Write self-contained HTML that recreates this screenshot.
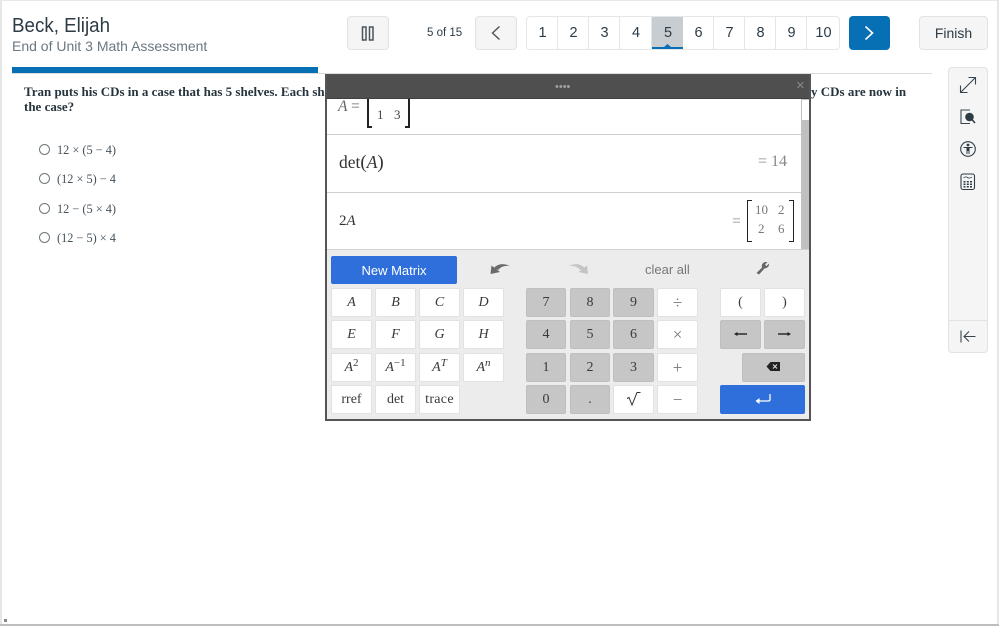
<!DOCTYPE html>
<html lang="en"><head><meta charset="utf-8"><title>Assessment</title>
<style>
html,body{margin:0;padding:0;width:999px;height:626px;overflow:hidden;background:#fff}
body{position:relative;font-family:"Liberation Sans",sans-serif;color:#2d3b45}
.a{position:absolute;box-sizing:border-box}
.btn{background:#f5f5f5;border:1px solid #dfe3e5;border-radius:4px}
.n{position:absolute;top:0;height:32px;line-height:33px;text-align:center;font-size:14.5px;color:#2d3b45;border-right:1px solid #e4e7e9;box-sizing:border-box;padding-left:1px}
.serif{font-family:"Liberation Serif",serif}
.k{position:absolute;box-sizing:border-box;height:29px;text-align:center;line-height:27px;font-family:"Liberation Serif",serif;font-size:14px;color:#3a3a3a;background:#fff;border:1px solid #e2e2e2;border-radius:2px}
.g{background:#c6c6c6;border-color:#bfbfbf}
.o{font-size:17px;color:#777}
.i{font-style:italic}
.k sup{font-size:11px;line-height:0;position:relative;top:-1px;vertical-align:4px}
.opt{position:absolute;left:57px;font-family:"Liberation Serif",serif;font-size:12.3px;color:#45525b;white-space:nowrap}
.r{position:absolute;left:39px;width:11px;height:11px;border:1.2px solid #6f777d;border-radius:50%;box-sizing:border-box;background:#fff}
.br{position:absolute;border:1.4px solid #222;box-sizing:border-box}
</style></head><body>
<div class="a" style="left:0;top:0;width:999px;height:1px;background:#e8e8e8"></div>
<div class="a" style="left:0;top:0;width:2px;height:625px;background:#e6e6e6"></div>
<div class="a" style="left:997px;top:0;width:2px;height:625px;background:#e6e6e6"></div>
<div class="a" style="left:0;top:624px;width:999px;height:2px;background:#bdbdbd"></div>
<div class="a" style="left:4px;top:619px;width:3px;height:3px;background:#888"></div>

<div class="a" style="left:12px;top:13px;font-size:20.5px;line-height:25px;color:#2d3b45;white-space:nowrap;transform:scaleX(.915);transform-origin:left center">Beck, Elijah</div>
<div class="a" style="left:12px;top:37px;font-size:14px;line-height:18px;color:#6b7780;white-space:nowrap">End of Unit 3 Math Assessment</div>

<div class="a btn" style="left:347px;top:16px;width:42px;height:34px"></div>
<svg class="a" style="left:361px;top:26px" width="14" height="15"><rect x="1.5" y="1" width="3.5" height="13" fill="none" stroke="#4a555d" stroke-width="1.5"/><rect x="8.5" y="1" width="3.5" height="13" fill="none" stroke="#4a555d" stroke-width="1.5"/></svg>
<div class="a" style="left:427px;top:26px;font-size:11.5px;line-height:14px;white-space:nowrap">5 of 15</div>
<div class="a btn" style="left:475px;top:16px;width:42px;height:34px"></div>
<svg class="a" style="left:489px;top:24px" width="14" height="18"><path d="M10.5 2.5 L3.5 9 L10.5 15.5" fill="none" stroke="#4a555d" stroke-width="1.4"/></svg>

<div class="a" style="left:526px;top:16px;width:314px;height:34px;background:#fff;border:1px solid #e4e7e9;border-radius:4px;overflow:hidden">
<div class="n" style="left:0;width:31px">1</div>
<div class="n" style="left:31px;width:31px">2</div>
<div class="n" style="left:62px;width:31px">3</div>
<div class="n" style="left:93px;width:32px">4</div>
<div class="n" style="left:125px;width:31px;background:#c7cdd1;border:0">5</div>
<div class="n" style="left:156px;width:31px">6</div>
<div class="n" style="left:187px;width:31px">7</div>
<div class="n" style="left:218px;width:31px">8</div>
<div class="n" style="left:249px;width:31px">9</div>
<div class="n" style="left:280px;width:32px;border:0">10</div>
<div class="a" style="left:125px;top:30px;width:31px;height:2px;background:#0770b5"></div>
<svg class="a" style="left:136px;top:27px" width="9" height="4"><path d="M0 4 L4.5 0 L9 4Z" fill="#0770b5"/></svg>
</div>

<div class="a" style="left:849px;top:16px;width:41px;height:34px;background:#0770b5;border-radius:4px"></div>
<svg class="a" style="left:862px;top:24px" width="14" height="18"><path d="M3.5 2.5 L10.5 9 L3.5 15.5" fill="none" stroke="#fff" stroke-width="1.6"/></svg>
<div class="a btn" style="left:919px;top:16px;width:69px;height:34px;text-align:center;line-height:33px;font-size:14px;color:#2d3b45">Finish</div>

<div class="a" style="left:12px;top:73px;width:920px;height:1px;background:#d8dcdf"></div>
<div class="a" style="left:12px;top:67px;width:306px;height:6px;background:#0770b5"></div>

<div class="a serif" style="left:24px;top:83.5px;width:900px;font-size:13px;line-height:15.5px;font-weight:bold;color:#26343d;white-space:nowrap">Tran puts his CDs in a case that has 5 shelves. Each shelf</div>
<div class="a serif" style="left:24px;top:99px;font-size:13px;line-height:15.5px;font-weight:bold;color:#26343d;white-space:nowrap">the case?</div>
<div class="a serif" style="left:811px;top:83.5px;font-size:13px;line-height:15.5px;font-weight:bold;color:#26343d;white-space:nowrap">y CDs are now in</div>

<div class="r" style="top:144px"></div><div class="opt" style="top:143px">12 × (5 − 4)</div>
<div class="r" style="top:173px"></div><div class="opt" style="top:172px">(12 × 5) − 4</div>
<div class="r" style="top:203px"></div><div class="opt" style="top:202px">12 − (5 × 4)</div>
<div class="r" style="top:232px"></div><div class="opt" style="top:231px">(12 − 5) × 4</div>

<!-- right panel -->
<div class="a btn" style="left:948px;top:67px;width:40px;height:286px"></div>
<div class="a" style="left:949px;top:320px;width:38px;height:1px;background:#dfe3e5"></div>
<svg class="a" style="left:958px;top:75px" width="20" height="20" fill="none" stroke="#3a464e" stroke-width="1.1"><path d="M2.5 17.5 L17.5 2.5 M10.5 2.5 H17.5 V9.5 M2.5 10.5 V17.5 H9.5"/></svg>
<svg class="a" style="left:959px;top:108px" width="18" height="18"><path d="M11 2 H2 V15.5 H11" fill="none" stroke="#3a464e" stroke-width="1.1"/><circle cx="10.5" cy="9" r="4.3" fill="#2d3b45"/><path d="M13 11.5 L16 15" stroke="#2d3b45" stroke-width="1.5"/></svg>
<svg class="a" style="left:959px;top:140px" width="18" height="18"><circle cx="9" cy="9" r="7.3" fill="none" stroke="#2d3b45" stroke-width="1.1"/><circle cx="9" cy="5" r="1.4" fill="#2d3b45"/><path d="M4.5 7 H13.5 V8 H10.5 V14 H9.5 V11 H8.5 V14 H7.5 V8 H4.5Z" fill="#2d3b45"/></svg>
<svg class="a" style="left:960px;top:173px" width="16" height="18"><rect x="1" y="1" width="13.5" height="15.5" rx="2" fill="none" stroke="#2d3b45" stroke-width="1.1"/><path d="M3.5 5 Q5.5 3 7.5 4.5 T12 4" fill="none" stroke="#2d3b45" stroke-width=".8"/><path d="M3.5 8 h2v1.5h-2z M6.8 8 h2v1.5h-2z M10 8 h2v1.5h-2z M3.5 10.5 h2v1.5h-2z M6.8 10.5 h2v1.5h-2z M10 10.5 h2v1.5h-2z M3.5 13 h2v1.5h-2z M6.8 13 h2v1.5h-2z M10 13 h2v1.5h-2z" fill="#2d3b45"/></svg>
<svg class="a" style="left:959px;top:329px" width="18" height="15" fill="none" stroke="#3a464e" stroke-width="1.1"><path d="M2 1.5 V13.5 M16.5 7.5 H5 M10 2.5 L5 7.5 L10 12.5"/></svg>

<!-- calculator -->
<div class="a" style="left:325px;top:74px;width:486px;height:347px;background:#fff;border:2px solid #555;border-top:1px solid #555;overflow:hidden">
 <div class="a" style="left:0;top:0;width:484px;height:24px;background:#4f4f4f;border-bottom:1px solid #3f3f3f;z-index:5"></div>
 <div class="a" style="left:228px;top:8px;z-index:6;color:#a0a0a0;font-size:11px;line-height:8px;white-space:nowrap">••••</div>
 <div class="a" style="left:469px;top:3px;z-index:6;color:#8a8a8a;font-size:15px;line-height:15px">×</div>

 <div class="a serif i" style="left:11px;top:23px;font-size:15.5px;line-height:17px;color:#666;white-space:nowrap">A <span style="font-style:normal">=</span></div>
 <div class="br" style="left:40px;top:10px;width:5px;height:43px;border-width:2px;border-right:0"></div>
 <div class="br" style="left:78px;top:10px;width:5px;height:43px;border-width:2px;border-left:0"></div>
 <div class="a serif" style="left:50px;top:32px;font-size:13px;line-height:16px;color:#444">1</div>
 <div class="a serif" style="left:67px;top:32px;font-size:13px;line-height:16px;color:#444">3</div>
 <div class="a" style="left:0;top:59px;width:474px;height:1px;background:#cfcfcf"></div>

 <div class="a serif" style="left:12px;top:77px;font-size:17.5px;line-height:20px;color:#333;white-space:nowrap">det<span style="font-size:19px">(</span><span class="i">A</span><span style="font-size:19px">)</span></div>
 <div class="a serif" style="left:431px;top:78px;font-size:16px;line-height:18px;color:#888;white-space:nowrap">= 14</div>
 <div class="a" style="left:0;top:117px;width:474px;height:1px;background:#cfcfcf"></div>

 <div class="a serif" style="left:12px;top:137px;font-size:15px;line-height:18px;color:#333;white-space:nowrap">2<span class="i">A</span></div>
 <div class="a serif" style="left:405px;top:138px;font-size:15.5px;line-height:18px;color:#888">=</div>
 <div class="br" style="left:420px;top:125px;width:5px;height:42px;border-right:0"></div>
 <div class="br" style="left:462px;top:125px;width:5px;height:42px;border-left:0"></div>
 <div class="a serif" style="left:428px;top:127px;font-size:13px;line-height:16px;color:#777">10</div>
 <div class="a serif" style="left:451px;top:127px;font-size:13px;line-height:16px;color:#777">2</div>
 <div class="a serif" style="left:431px;top:146px;font-size:13px;line-height:16px;color:#777">2</div>
 <div class="a serif" style="left:451px;top:146px;font-size:13px;line-height:16px;color:#777">6</div>

 <div class="a" style="left:474px;top:24px;width:10px;height:151px;background:#c0c0c0"></div>
 <div class="a" style="left:475px;top:25px;width:7px;height:20px;background:#fff"></div>

 <div class="a" style="left:0;top:174px;width:484px;height:172px;background:#ececec;border-top:1px solid #d2d2d2"></div>
 <div class="a" style="left:4px;top:181px;width:126px;height:28px;background:#2f6fdb;border-radius:2px;color:#fff;font-size:13px;line-height:29px;text-align:center">New Matrix</div>
 <svg class="a" style="left:163px;top:185px" width="22" height="18"><path d="M0.5 14 L1.5 5.5 L10 12Z" fill="#6a6a6a"/><path d="M4 8 Q10 1.5 19.5 6 Q12 5 8 10Z" fill="#6a6a6a"/></svg>
 <svg class="a" style="left:241px;top:185px" width="22" height="18"><path d="M20 14 L19 5.5 L10.5 12Z" fill="#c4c4c4"/><path d="M16.5 8 Q10.5 1.5 1 6 Q8.5 5 12.5 10Z" fill="#c4c4c4"/></svg>
 <div class="a" style="left:318px;top:187px;font-size:13px;line-height:16px;color:#777;white-space:nowrap">clear all</div>
 <svg class="a" style="left:428px;top:185px" width="16" height="16"><path d="M1.5 13 L7 7.5 Q6 3.5 10 2 L12.5 2 L10 4.5 L11.5 6 L14 3.5 Q14.5 7.5 9.5 8.5 L4 14.5Z" fill="#666"/></svg>
</div>

<!-- keypad placed on page coords -->
<div class="k i" style="left:331px;top:288px;width:41px">A</div>
<div class="k i" style="left:375px;top:288px;width:41px">B</div>
<div class="k i" style="left:419px;top:288px;width:41px">C</div>
<div class="k i" style="left:463px;top:288px;width:41px">D</div>
<div class="k i" style="left:331px;top:320px;width:41px">E</div>
<div class="k i" style="left:375px;top:320px;width:41px">F</div>
<div class="k i" style="left:419px;top:320px;width:41px">G</div>
<div class="k i" style="left:463px;top:320px;width:41px">H</div>
<div class="k i" style="left:331px;top:353px;width:41px">A<sup style="font-style:normal">2</sup></div>
<div class="k i" style="left:375px;top:353px;width:41px">A<sup style="font-style:normal">−1</sup></div>
<div class="k i" style="left:419px;top:353px;width:41px">A<sup>T</sup></div>
<div class="k i" style="left:463px;top:353px;width:41px">A<sup>n</sup></div>
<div class="k" style="left:331px;top:385px;width:41px">rref</div>
<div class="k" style="left:375px;top:385px;width:41px">det</div>
<div class="k" style="left:419px;top:385px;width:41px;letter-spacing:.3px">trace</div>

<div class="k g" style="left:526px;top:288px;width:40px">7</div>
<div class="k g" style="left:570px;top:288px;width:40px">8</div>
<div class="k g" style="left:613px;top:288px;width:41px">9</div>
<div class="k o" style="left:657px;top:288px;width:41px">÷</div>
<div class="k g" style="left:526px;top:320px;width:40px">4</div>
<div class="k g" style="left:570px;top:320px;width:40px">5</div>
<div class="k g" style="left:613px;top:320px;width:41px">6</div>
<div class="k o" style="left:657px;top:320px;width:41px">×</div>
<div class="k g" style="left:526px;top:353px;width:40px">1</div>
<div class="k g" style="left:570px;top:353px;width:40px">2</div>
<div class="k g" style="left:613px;top:353px;width:41px">3</div>
<div class="k o" style="left:657px;top:353px;width:41px">+</div>
<div class="k g" style="left:526px;top:385px;width:40px">0</div>
<div class="k g" style="left:570px;top:385px;width:40px">.</div>
<div class="k" style="left:613px;top:385px;width:41px"></div>
<svg class="a" style="left:625px;top:391px" width="17" height="16"><path d="M2 7.5 L4 6.5 L7 14 L12 1.5 H15.5" fill="none" stroke="#333" stroke-width="1"/></svg>
<div class="k o" style="left:657px;top:385px;width:41px">−</div>

<div class="k" style="left:720px;top:288px;width:41px">(</div>
<div class="k" style="left:764px;top:288px;width:41px">)</div>
<div class="k g" style="left:720px;top:320px;width:41px"></div>
<svg class="a" style="left:733px;top:329px" width="15" height="10"><path d="M14 5 H3" stroke="#222" stroke-width="1.4"/><path d="M4.5 3 L1 5 L4.5 7Z" fill="#222"/></svg>
<div class="k g" style="left:764px;top:320px;width:41px"></div>
<svg class="a" style="left:777px;top:329px" width="15" height="10"><path d="M1 5 H12" stroke="#222" stroke-width="1.4"/><path d="M10.5 3 L14 5 L10.5 7Z" fill="#222"/></svg>
<div class="k g" style="left:742px;top:353px;width:63px"></div>
<svg class="a" style="left:766px;top:361px" width="15" height="11"><path d="M0.5 5.5 L4.5 1 H14 V10 H4.5Z" fill="#222"/><path d="M7 3.5 L11 7.5 M11 3.5 L7 7.5" stroke="#ddd" stroke-width="1.1"/></svg>
<div class="k" style="left:720px;top:385px;width:85px;background:#2f6fdb;border-color:#2f6fdb"></div>
<svg class="a" style="left:754px;top:393px" width="18" height="12"><path d="M16 1 V6.5 Q16 8 14 8 H3" fill="none" stroke="#fff" stroke-width="1.3"/><path d="M5.5 5 L1.5 8 L5.5 11Z" fill="#fff"/></svg>
</body></html>
